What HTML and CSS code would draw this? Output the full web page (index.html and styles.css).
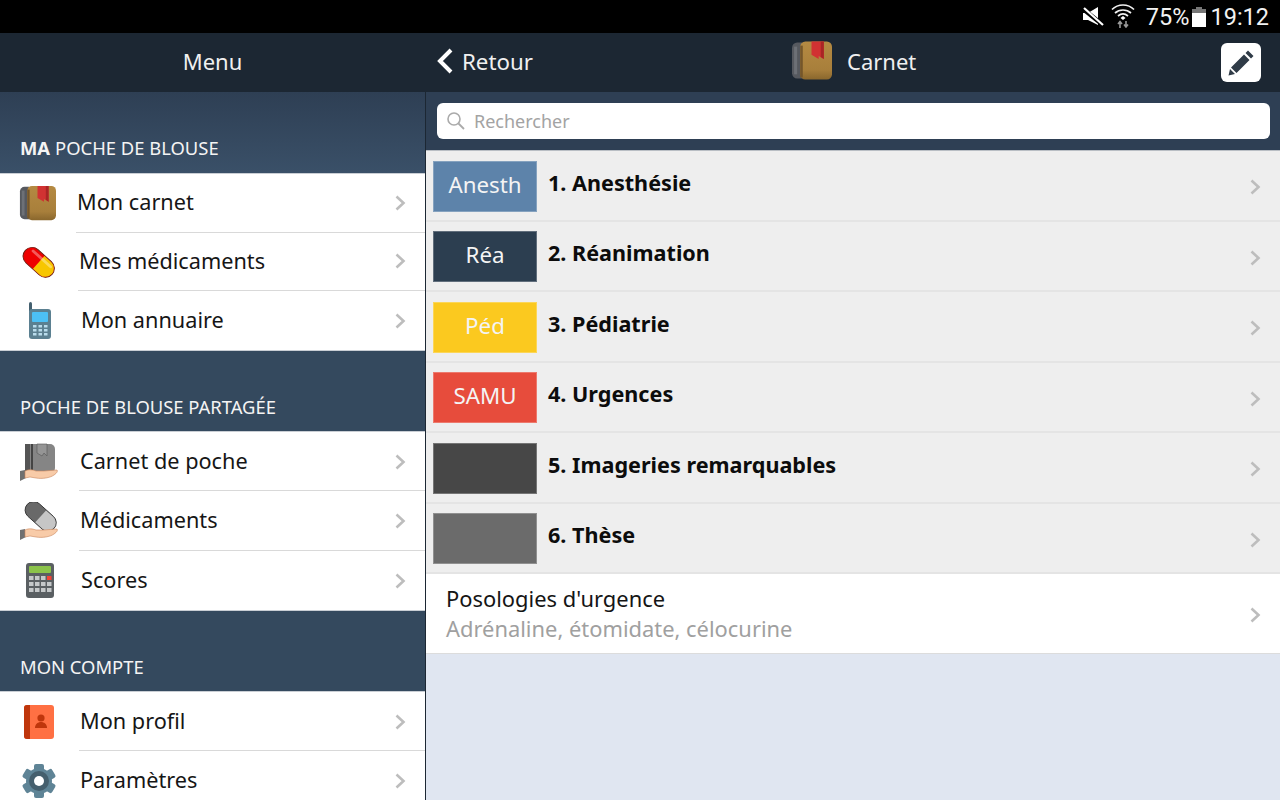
FILE: index.html
```html
<!DOCTYPE html>
<html lang="fr">
<head>
<meta charset="utf-8">
<title>Carnet</title>
<link rel="stylesheet" href="styles.css">
</head>
<body>
<svg class="defs" width="0" height="0" aria-hidden="true">
  <defs>
    <linearGradient id="brown" x1="0" y1="0" x2="0" y2="1"><stop offset="0" stop-color="#b58a42"/><stop offset=".75" stop-color="#a87f3b"/><stop offset="1" stop-color="#8a672d"/></linearGradient>
    <symbol id="chev" viewBox="0 0 12 18"><path d="M2.500 2.500l7 6.500-7 6.500" fill="none" stroke="#bdbdbd" stroke-width="2.600"/></symbol>
    <symbol id="book" viewBox="0 0 40 40">
      <path d="M11 2H6a5 5 0 0 0-5 5v25a5 5 0 0 0 5 5h6z" fill="#56595f"/>
      <path d="M3 6h3v27H3z" fill="#6d7076"/>
      <rect x="9" y="1" width="31" height="37" rx="5" fill="url(#brown)"/>
      <rect x="9" y="5" width="2.500" height="31" fill="#75562a"/>
      <path d="M20 1h12v17l-5-3v3l-7-4z" fill="#d13232"/>
      <path d="M29 1h3v17l-3-2z" fill="#a92525"/>
    </symbol>
    <symbol id="hand" viewBox="0 0 38 14">
      <path d="M0 4l5-1 1 8-6 3z" fill="#707070"/>
      <path d="M5 4c4-2 8-1 11 0h8c4 0 9-1 13-1 1 1 0 3-3 5-4 3-12 4-18 3l-6-1-5 1z" fill="#f8cba8" stroke="#c9855a" stroke-width=".6"/>
    </symbol>
    <symbol id="graybook" viewBox="0 0 38 38">
      <rect x="5" y="1" width="30" height="29" rx="5" fill="#858585"/>
      <path d="M10 1H5v28h5z" fill="#555"/>
      <rect x="11" y="1" width="2" height="28" fill="#444"/>
      <path d="M17 1h10v12l-3-3-2 3-5-3z" fill="#959595" stroke="#555" stroke-width=".6"/>
      <use href="#hand" x="0" y="24" width="38" height="14"/>
    </symbol>
    <symbol id="graypill" viewBox="0 0 38 38">
      <g transform="rotate(42 21 14)"><rect x="3" y="6" width="36" height="17" rx="8.500" fill="#696969" stroke="#333" stroke-width=".9"/><path d="M21 6.500h9.500a8 8 0 0 1 0 16H21z" fill="#c6c6c6"/></g>
      <use href="#hand" x="0" y="24" width="38" height="14"/>
    </symbol>
  </defs>
</svg>
<div class="status">
  <svg class="st-mute" width="22" height="22" viewBox="0 0 22 22"><path d="M1 7h5l10-6v18L6 14H1z" fill="#fff"/><path d="M1 3l20 16" stroke="#000" stroke-width="4.500"/><path d="M2 2l19 17" stroke="#fff" stroke-width="2.200"/></svg>
  <svg class="st-wifi" width="24" height="25" viewBox="0 0 24 25"><g fill="none" stroke="#f2f2f2" stroke-width="1.700"><path d="M1 6.500c6-6 16-6 22 0"/><path d="M4 10c4.500-4 11.500-4 16 0"/><path d="M7 13c3-2.500 7-2.500 10 0"/></g><path d="M9.500 15l2.500 2 2.500-2-2.500-2z" fill="#fff"/><path d="M9 25v-6M7 21l2-2.500 2 2.500M15 18v6M13 21.500l2 2.500 2-2.500" stroke="#999" stroke-width="1.600" fill="none"/></svg>
  <span class="st-pct">75%</span>
  <svg class="st-batt" width="14" height="20" viewBox="0 0 14 20"><rect x="4" y="0" width="6" height="3" fill="#777"/><rect y="2" width="14" height="5" fill="#777"/><rect y="6" width="14" height="14" fill="#fff"/></svg>
  <span class="st-time">19:12</span>
</div>
<div class="app">
  <aside class="side">
    <div class="side-top"><span class="side-title">Menu</span></div>
    <h2 class="sec sec-first"><b>MA</b> POCHE DE BLOUSE</h2>
    <ul class="list list-tight">
      <li class="item"><span class="ic ic-a"><svg width="37" height="37"><use href="#book"/></svg></span><span class="lab">Mon carnet<svg width="12" height="18"><use href="#chev"/></svg></span></li>
      <li class="item"><span class="ic ic-b"><svg width="34" height="34" viewBox="0 0 36 36"><g transform="rotate(42 18 18)"><rect x="-1" y="9" width="38" height="19" rx="9.500" fill="#e00" stroke="#6b1f14"/><path d="M18 9.500h9.500a9 9 0 0 1 0 18H18z" fill="#f7c600"/><rect x="4" y="12" width="28" height="3" rx="1.500" fill="#fff" opacity=".35"/></g></svg></span><span class="lab">Mes médicaments<svg width="12" height="18"><use href="#chev"/></svg></span></li>
      <li class="item item-last"><span class="ic ic-c"><svg width="24" height="37" viewBox="0 0 24 37"><rect x="1" y="0" width="3" height="10" rx="1.500" fill="#44606f"/><rect x="1" y="7" width="22" height="30" rx="3" fill="#5b8091"/><rect x="4" y="10" width="16" height="10" rx="1" fill="#4cc0f5"/><g fill="#b9dcec"><rect x="5" y="23" width="3.500" height="2.500"/><rect x="10.500" y="23" width="3.500" height="2.500"/><rect x="16" y="23" width="3.500" height="2.500"/><rect x="5" y="27" width="3.500" height="2.500"/><rect x="10.500" y="27" width="3.500" height="2.500"/><rect x="16" y="27" width="3.500" height="2.500"/><rect x="5" y="31" width="3.500" height="2.500"/><rect x="10.500" y="31" width="3.500" height="2.500"/><rect x="16" y="31" width="3.500" height="2.500"/></g></svg></span><span class="lab">Mon annuaire<svg width="12" height="18"><use href="#chev"/></svg></span></li>
    </ul>
    <h2 class="sec">POCHE DE BLOUSE PARTAGÉE</h2>
    <ul class="list">
      <li class="item"><span class="ic ic-d"><svg width="38" height="38"><use href="#graybook"/></svg></span><span class="lab">Carnet de poche<svg width="12" height="18"><use href="#chev"/></svg></span></li>
      <li class="item"><span class="ic ic-d"><svg width="38" height="38"><use href="#graypill"/></svg></span><span class="lab">Médicaments<svg width="12" height="18"><use href="#chev"/></svg></span></li>
      <li class="item item-last"><span class="ic ic-e"><svg width="28" height="35" viewBox="0 0 28 35"><rect width="28" height="35" rx="3" fill="#5a5f62"/><rect x="3" y="3" width="22" height="7" rx="1" fill="#8bc34a"/><g fill="#c5c8c9"><rect x="3" y="13" width="4.500" height="4"/><rect x="9" y="13" width="4.500" height="4"/><rect x="15" y="13" width="4.500" height="4"/><rect x="3" y="19" width="4.500" height="4"/><rect x="9" y="19" width="4.500" height="4"/><rect x="15" y="19" width="4.500" height="4"/><rect x="21" y="19" width="4.500" height="4"/><rect x="3" y="25" width="4.500" height="4"/><rect x="9" y="25" width="4.500" height="4"/><rect x="15" y="25" width="4.500" height="4"/><rect x="21" y="25" width="4.500" height="4"/></g><rect x="21" y="13" width="4.500" height="4" fill="#f44336"/></svg></span><span class="lab">Scores<svg width="12" height="18"><use href="#chev"/></svg></span></li>
    </ul>
    <h2 class="sec">MON COMPTE</h2>
    <ul class="list">
      <li class="item"><span class="ic ic-d"><svg width="30" height="34" viewBox="0 0 30 34"><rect width="30" height="34" rx="3" fill="#ff7043"/><path d="M3 0h3v34H3a3 3 0 0 1-3-3V3a3 3 0 0 1 3-3z" fill="#bf360c"/><circle cx="17" cy="13" r="3.600" fill="#bf360c"/><path d="M11 23c0-8 12-8 12 0z" fill="#bf360c"/></svg></span><span class="lab">Mon profil<svg width="12" height="18"><use href="#chev"/></svg></span></li>
      <li class="item"><span class="ic ic-d"><svg width="36" height="36" viewBox="0 0 36 36"><g fill="#5f8496"><rect x="13" y="1" width="10" height="34" rx="2"/><rect x="13" y="1" width="10" height="34" rx="2" transform="rotate(60 18 18)"/><rect x="13" y="1" width="10" height="34" rx="2" transform="rotate(120 18 18)"/><circle cx="18" cy="18" r="13"/></g><circle cx="18" cy="18" r="10" fill="#455f6d"/><circle cx="18" cy="18" r="5" fill="#fff"/></svg></span><span class="lab">Paramètres<svg width="12" height="18"><use href="#chev"/></svg></span></li>
    </ul>
  </aside>
  <main class="main">
    <header class="top">
      <div class="back"><svg width="20" height="28" viewBox="0 0 20 28"><path d="M16 3L5 14l11 11" fill="none" stroke="#fff" stroke-width="4"/></svg><span>Retour</span></div>
      <div class="top-title"><svg width="41" height="42"><use href="#book"/></svg><span>Carnet</span></div>
      <div class="edit"><svg width="28" height="28" viewBox="0 0 28 28"><path d="M21 1.500l5.500 5.500-2.500 2.500-5.500-5.500zM17 5.500l5.500 5.500L9.500 24l-5.500-5.500zM3 20l5 5-6.500 1.500z" fill="#2f3b47"/></svg></div>
    </header>
    <div class="search-bar">
      <div class="search"><svg width="20" height="20" viewBox="0 0 20 20"><circle cx="8" cy="8" r="6" fill="none" stroke="#aaa" stroke-width="1.600"/><path d="M12.500 12.500L18 18" stroke="#aaa" stroke-width="1.800"/></svg><span>Rechercher</span></div>
    </div>
    <ul class="cats">
      <li class="cat"><span class="tag tag-a">Anesth</span><span class="cat-name">1. Anesthésie</span><svg width="12" height="18"><use href="#chev"/></svg></li>
      <li class="cat"><span class="tag tag-r">Réa</span><span class="cat-name">2. Réanimation</span><svg width="12" height="18"><use href="#chev"/></svg></li>
      <li class="cat"><span class="tag tag-p">Péd</span><span class="cat-name">3. Pédiatrie</span><svg width="12" height="18"><use href="#chev"/></svg></li>
      <li class="cat"><span class="tag tag-s">SAMU</span><span class="cat-name">4. Urgences</span><svg width="12" height="18"><use href="#chev"/></svg></li>
      <li class="cat"><span class="tag tag-d"></span><span class="cat-name">5. Imageries remarquables</span><svg width="12" height="18"><use href="#chev"/></svg></li>
      <li class="cat"><span class="tag tag-g"></span><span class="cat-name">6. Thèse</span><svg width="12" height="18"><use href="#chev"/></svg></li>
    </ul>
    <div class="poso">
      <div class="poso-text"><div class="poso-t">Posologies d'urgence</div><div class="poso-s">Adrénaline, étomidate, célocurine</div></div>
      <svg class="poso-chev" width="12" height="18"><use href="#chev"/></svg>
    </div>
  </main>
</div>
</body>
</html>
```
FILE: styles.css
```css
* { box-sizing: border-box; }
html, body { margin: 0; height: 800px; overflow: hidden; }
body { font-family: "Noto Sans", "Open Sans", sans-serif; background: #e0e6f1; color: #111; display: flex; flex-direction: column; }
.defs { position: absolute; }
ul { list-style: none; margin: 0; padding: 0; }
svg { display: block; flex: none; }

.status { height: 33px; background: #000; color: #f2f2f2; display: flex; align-items: center; justify-content: flex-end; font-family: Roboto, sans-serif; font-size: 23.500px; padding-right: 11px; }
.st-mute { margin-right: 7px; }
.st-wifi { margin-right: 11px; margin-top: -3px; }
.st-batt { margin: 0 4px 0 3px; }

.app { flex: 1; display: flex; min-height: 0; }
.side { width: 426px; flex: none; border-right: 1px solid #1c2733; background: #34495e; overflow: hidden; }
.side-top { height: 59px; background: #1c2733; display: flex; align-items: center; justify-content: center; color: #f0f0f0; font-size: 22px; padding-bottom: 4px; }
.sec { margin: 0; height: 80px; padding: 0 0 12px 20px; display: flex; align-items: flex-end; gap: 5px; font-size: 18.400px; font-weight: 400; color: #f4f4f4; background: #34495e; }
.sec-first { height: 81px; padding-bottom: 13px; background: linear-gradient(#2e3f54, #3a5068); }
.sec b { font-weight: 700; }
.list { background: #fff; border-top: 1px solid #c9ced4; border-bottom: 1px solid #c9ced4; }
.item { height: 59.330px; display: flex; align-items: stretch; }
.list-tight .item { height: 58.670px; }
.ic { flex: none; display: flex; align-items: center; justify-content: center; padding-right: 1px; }
.ic-a { width: 76px; }
.ic-b { width: 78px; }
.ic-c { width: 80px; }
.ic-d { width: 79px; }
.ic-e { width: 80px; }
.lab { flex: 1; display: flex; align-items: center; justify-content: space-between; font-size: 21.700px; padding: 0 19px 1px 1px; border-bottom: 1px solid #d9d9d9; color: #161616; }
.lab svg { margin-top: 2px; }
.list-tight .lab { padding-bottom: 2px; }
.item-last .lab { border-bottom: 0; }

.main { flex: 1; min-width: 0; display: flex; flex-direction: column; }
.top { height: 59px; background: #1c2733; display: flex; align-items: center; justify-content: space-between; position: relative; color: #f0f0f0; font-size: 22.300px; padding: 0 19px 0 9px; }
.back { display: flex; align-items: center; gap: 7px; padding-bottom: 3px; }
.top-title { position: absolute; left: 365px; top: 7px; display: flex; align-items: center; gap: 15px; font-size: 22px; }
.edit { width: 40px; height: 39px; background: #fff; border-radius: 6px; display: flex; align-items: center; justify-content: center; }
.search-bar { height: 59px; background: #2e3f54; padding: 11px 10px 11px 11px; border-bottom: 1px solid #b9bec4; }
.search { height: 36px; background: #fff; border-radius: 6px; display: flex; align-items: center; gap: 8px; padding-left: 9px; color: #a3a3a3; font-size: 18px; }
.cats { background: #eeeeee; }
.cat { height: 70.500px; padding: 10px 19px 8px 7px; display: flex; align-items: center; border-bottom: 2px solid #e4e4e4; }
.cat svg { margin-top: 2px; }
.tag { width: 104px; height: 51px; flex: none; display: flex; align-items: center; justify-content: center; padding-bottom: 4px; color: #f4f4f4; font-size: 22.300px; border: 1px solid rgba(255,255,255,.25); }
.tag-a { background: #5d83aa; }
.tag-r { background: #2c3e50; }
.tag-p { background: #fbc91f; }
.tag-s { background: #e74c3c; }
.tag-d { background: #474747; }
.tag-g { background: #6b6b6b; }
.cat-name { flex: 1; padding: 0 0 8px 11px; font-size: 21.600px; font-weight: 700; color: #0c0c0c; }
.poso { height: 80px; background: #fff; padding: 0 19px 0 20px; display: flex; align-items: center; justify-content: space-between; border-bottom: 1px solid #dcdcdc; font-size: 21.900px; }
.poso-chev { margin-top: 2px; }
.poso-t { line-height: 30px; color: #151515; }
.poso-s { line-height: 30px; color: #a0a0a0; }
```
